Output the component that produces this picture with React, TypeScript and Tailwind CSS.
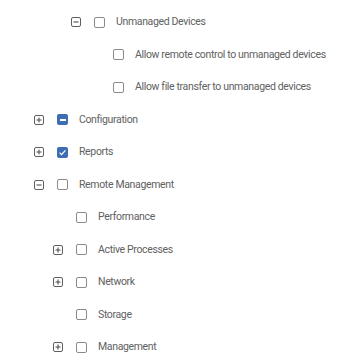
import React from "react";

type State = "off" | "on" | "mixed";
type Node = { label: string; level: number; expander?: "plus" | "minus"; state: State };

const rows: Node[] = [
  { label: "Unmanaged Devices", level: 2, expander: "minus", state: "off" },
  { label: "Allow remote control to unmanaged devices", level: 3, state: "off" },
  { label: "Allow file transfer to unmanaged devices", level: 3, state: "off" },
  { label: "Configuration", level: 0, expander: "plus", state: "mixed" },
  { label: "Reports", level: 0, expander: "plus", state: "on" },
  { label: "Remote Management", level: 0, expander: "minus", state: "off" },
  { label: "Performance", level: 1, state: "off" },
  { label: "Active Processes", level: 1, expander: "plus", state: "off" },
  { label: "Network", level: 1, expander: "plus", state: "off" },
  { label: "Storage", level: 1, state: "off" },
  { label: "Management", level: 1, expander: "plus", state: "off" },
];

const indent = ["pl-[34px]", "pl-[53px]", "pl-[71px]", "pl-[90px]"];

function Expander({ kind }: { kind: "plus" | "minus" }) {
  return (
    <svg width="10" height="10" viewBox="0 0 10 10" className="block">
      <rect x="0.5" y="0.5" width="9" height="9" rx="1.5" fill="none" stroke="#5f5f5f" strokeWidth="1" />
      <path d="M2.5 5h5" stroke="#5f5f5f" strokeWidth="1.2" />
      {kind === "plus" && <path d="M5 2.5v5" stroke="#5f5f5f" strokeWidth="1.2" />}
    </svg>
  );
}

function Check({ state }: { state: State }) {
  if (state === "off") {
    return <div className="w-[11px] h-[11px] rounded-[2px] border border-[#8a8a8a] bg-white" />;
  }
  return (
    <div className="w-[11px] h-[11px] rounded-[2px] bg-[#3e6db3] flex items-center justify-center">
      {state === "on" ? (
        <svg width="9" height="9" viewBox="0 0 9 9">
          <path d="M1.6 4.6l2 2 3.8-4.2" fill="none" stroke="white" strokeWidth="1.3" />
        </svg>
      ) : (
        <div className="w-[6px] h-[1.5px] bg-white" />
      )}
    </div>
  );
}

export default function App() {
  return (
    <div className="w-[353px] h-[360px] bg-white overflow-hidden pt-[6px] font-['Roboto',sans-serif]">
      {rows.map((r) => (
        <div key={r.label} className={`h-[32.5px] flex items-center ${indent[r.level]}`}>
          <div className="w-[23px] shrink-0">{r.expander && <Expander kind={r.expander} />}</div>
          <Check state={r.state} />
          <span className="ml-[11px] text-[10.5px] tracking-[-0.35px] text-[#616161] whitespace-nowrap">
            {r.label}
          </span>
        </div>
      ))}
    </div>
  );
}
